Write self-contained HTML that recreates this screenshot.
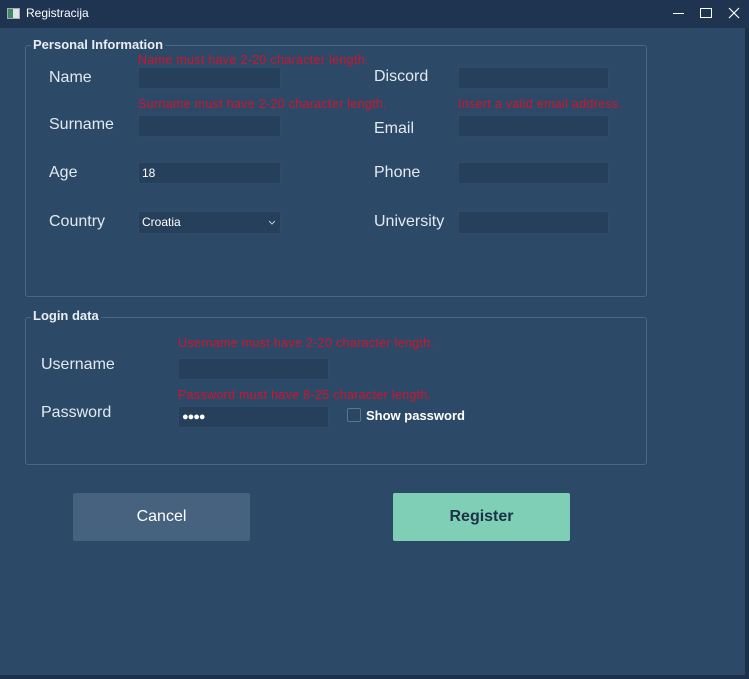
<!DOCTYPE html>
<html><head><meta charset="utf-8"><style>
*{margin:0;padding:0;box-sizing:border-box}
body{width:749px;height:679px;background:#1c3049;font-family:"Liberation Sans",Tahoma,sans-serif;position:relative;overflow:hidden}
.tb{position:absolute;left:0;top:0;width:749px;height:28px;background:#1e3450;color:#fff;font-size:12px}
.main{position:absolute;left:0;top:28px;width:745px;height:647px;background:#2c4a68}
.a{position:absolute}
.grp{position:absolute;border:1px solid #4a6683;border-radius:3px}
.gt{position:absolute;background:#2c4a68;color:#e8eef4;font-weight:bold;font-size:13px;padding:0 2px}
.lbl{position:absolute;color:#e3e9ef;font-size:16px}
.in{position:absolute;background:#263f5b;border:1px solid #2f4b68;border-radius:2px;color:#fff;font-size:12px;padding-left:3px;line-height:20px}
.err{position:absolute;color:#d0142c;font-size:12.5px;letter-spacing:0.3px}
.btn{position:absolute;width:177px;height:48px;border-radius:2px;font-size:16px;text-align:center;line-height:48px}
</style></head><body>
<div class="tb">
 <div class="a" style="left:7px;top:8px;width:13px;height:11px;background:#dfe6ea;border:1px solid #aaa"><div style="width:5px;height:9px;background:#3c8a6a"></div></div>
 <div class="a" style="left:26px;top:6px">Registracija</div>
 <div class="a" style="left:673px;top:13px;width:11px;height:1px;background:#fff"></div>
 <div class="a" style="left:700px;top:8px;width:12px;height:10px;border:1px solid #fff"></div>
 <svg class="a" style="left:728px;top:7px" width="12" height="12"><path d="M1 1L11 11M11 1L1 11" stroke="#fff" stroke-width="1.2"/></svg>
</div>
<div class="main"></div>
<div class="grp" style="left:25px;top:45px;width:622px;height:252px"></div>
<div class="gt" style="left:31px;top:37px">Personal Information</div>
<div class="grp" style="left:25px;top:317px;width:622px;height:148px"></div>
<div class="gt" style="left:31px;top:308px">Login data</div>

<div class="lbl" style="left:49px;top:69px">Name</div>
<div class="lbl" style="left:49px;top:116px">Surname</div>
<div class="lbl" style="left:49px;top:164px">Age</div>
<div class="lbl" style="left:49px;top:213px">Country</div>
<div class="lbl" style="left:374px;top:68px">Discord</div>
<div class="lbl" style="left:374px;top:120px">Email</div>
<div class="lbl" style="left:374px;top:164px">Phone</div>
<div class="lbl" style="left:374px;top:213px">University</div>

<div class="err" style="left:138px;top:53px">Name must have 2-20 character length.</div>
<div class="err" style="left:138px;top:97px">Surname must have 2-20 character length.</div>
<div class="err" style="left:458px;top:97px">Insert a valid email address.</div>

<div class="in" style="left:138px;top:67px;width:143px;height:22px"></div>
<div class="in" style="left:138px;top:115px;width:143px;height:22px"></div>
<div class="in" style="left:138px;top:162px;width:143px;height:22px">18</div>
<div class="in" style="left:138px;top:211px;width:143px;height:23px">Croatia<svg class="a" style="left:129px;top:8px" width="8" height="6"><path d="M1 1L4 4L7 1" stroke="#bcc8d4" fill="none"/></svg></div>
<div class="in" style="left:458px;top:67px;width:151px;height:22px"></div>
<div class="in" style="left:458px;top:115px;width:151px;height:22px"></div>
<div class="in" style="left:458px;top:162px;width:151px;height:22px"></div>
<div class="in" style="left:458px;top:211px;width:151px;height:23px"></div>

<div class="lbl" style="left:41px;top:356px">Username</div>
<div class="lbl" style="left:41px;top:404px">Password</div>
<div class="err" style="left:178px;top:336px">Username must have 2-20 character length.</div>
<div class="err" style="left:178px;top:388px">Password must have 8-25 character length.</div>
<div class="in" style="left:178px;top:358px;width:151px;height:22px"></div>
<div class="in" style="left:178px;top:406px;width:151px;height:22px;font-size:11px;letter-spacing:-1px">●●●●</div>
<div class="a" style="left:347px;top:408px;width:14px;height:14px;border:1px solid #5b7490;background:#2a4663;border-radius:2px"></div>
<div class="a" style="left:366px;top:408px;color:#fff;font-weight:bold;font-size:13px">Show password</div>

<div class="btn" style="left:73px;top:493px;background:#46627e;color:#fff">Cancel</div>
<div class="btn" style="left:393px;top:493px;background:#7fcfb7;color:#1b3245;font-weight:bold">Register</div>
</body></html>
